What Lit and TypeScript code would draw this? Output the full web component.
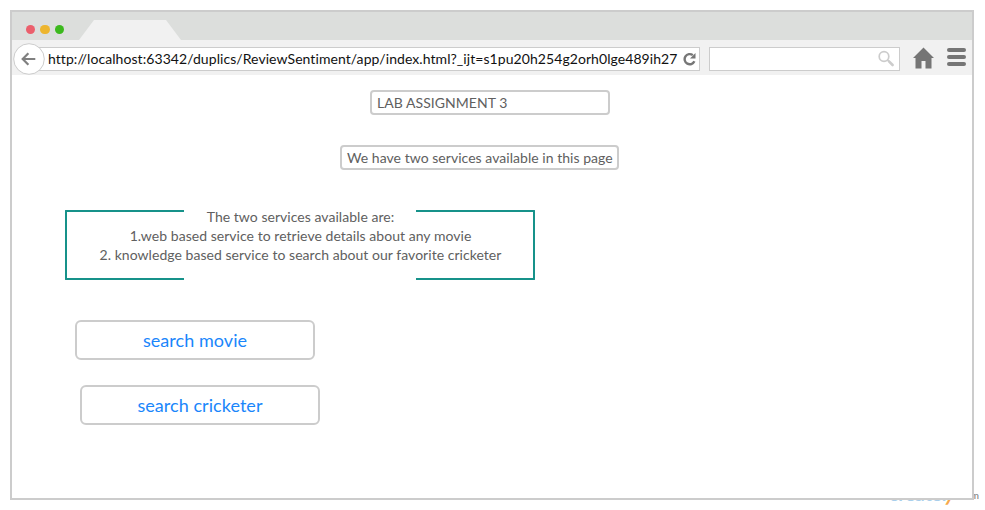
import { LitElement, html, css } from "lit";
import { customElement } from "lit/decorators.js";

@customElement("browser-chrome")
class BrowserChrome extends LitElement {
  static styles = css`
    :host { display: block; }
    .tabs { height: 28px; background: #dcdedc; display: flex; align-items: flex-end; }
    .lights { display: flex; gap: 5.5px; margin: 0 14.5px 6px 13.5px; }
    .light { width: 9.33px; height: 9.33px; border-radius: 50%; }
    .red { background: #eb5f6c; }
    .amber { background: #edb52e; }
    .green { background: #3cb91d; }
    .tab { display: block; width: 102px; height: 20px; }
    .bar { height: 35px; background: #f1f1f1; display: flex; align-items: center; box-sizing: border-box; padding: 0 7px 0 1px; }
    .back { display: block; width: 32px; height: 32px; flex: none; position: relative; margin-top: 2px; }
    .url, .search { box-sizing: border-box; height: 24px; margin-top: 3px; background: #fff; border: 1px solid #ccc; display: flex; align-items: center; flex: none; }
    .url { width: 671px; margin-left: -16px; padding: 0 3px 0 18px; justify-content: space-between; }
    .address { font: 14px/22px Lato, sans-serif; letter-spacing: .066px; font-variant-ligatures: common-ligatures; color: #111; white-space: nowrap; }
    .search { width: 191px; margin-left: 9px; justify-content: flex-end; padding-right: 4px; }
    svg { display: block; flex: none; }
    .glass { margin-bottom: 2px; }
    .home { margin: 0 0 0 13px; }
    .menu { margin: 0 0 1px 13px; }
  `;
  render() {
    return html`
      <div class="tabs">
        <div class="lights">
          <span class="light red"></span><span class="light amber"></span><span class="light green"></span>
        </div>
        <svg class="tab" viewBox="0 0 102 20"><path d="M0 20 15 0H87L102 20Z" fill="#f1f1f1" /></svg>
      </div>
      <div class="bar">
        <svg class="back" viewBox="0 0 32 32">
          <circle cx="16" cy="16" r="15.3" fill="#fff" stroke="#ccc" />
          <path d="M22.3 16H10M15.4 10.3 9.7 16 15.4 21.7" fill="none" stroke="#808080" stroke-width="2.2" />
        </svg>
        <div class="url">
          <span class="address">http://localhost:63342/duplics/ReviewSentiment/app/index.html?_ijt=s1pu20h254g2orh0lge489ih27</span>
          <svg width="13" height="14" viewBox="0 0 13 14">
            <path d="M11.4 9.3A5.1 5.1 0 1 1 9.8 3.1" fill="none" stroke="#777" stroke-width="2.4" />
            <path d="M12.5 1V6.5H7Z" fill="#777" />
          </svg>
        </div>
        <div class="search">
          <svg class="glass" width="17" height="17" viewBox="0 0 17 17" fill="none" stroke="#ccc">
            <circle cx="6" cy="6.5" r="4.8" stroke-width="1.7" />
            <path d="M9.5 10 11 11.5" stroke-width="1.6" />
            <path d="M11 11.3 14.6 15" stroke-width="2.6" stroke-linecap="round" />
          </svg>
        </div>
        <svg class="home" width="21" height="22" viewBox="0 0 21 22">
          <path d="M10.5 .5 21 11H18.5V21.5H12.5V14H8.5V21.5H2.5V11H0Z" fill="#757575" />
        </svg>
        <svg class="menu" width="19" height="18" viewBox="0 0 19 18" fill="#757575">
          <rect width="19" height="4" rx="2" /><rect y="7" width="19" height="4" rx="2" /><rect y="14" width="19" height="4" rx="2" />
        </svg>
      </div>
    `;
  }
}

@customElement("app-root")
class AppRoot extends LitElement {
  static styles = css`
    :host { display: block; position: relative; box-sizing: border-box; height: 510px; padding: 10px 11px 10px 10px; background: #fff; overflow: hidden; font: 14px/19px Lato, sans-serif; letter-spacing: .04px; color: #606060; }
    .window { position: relative; box-sizing: border-box; width: 964px; height: 490px; border: 2px solid #ccc; background: #fff; }
    .content { display: flex; flex-direction: column; align-items: flex-start; }
    .field { box-sizing: border-box; height: 25px; border: 2px solid #ccc; border-radius: 4px; padding: 1px 5px; white-space: nowrap; }
    .title { width: 240px; margin: 15px 0 0 358px; }
    .intro { width: 279px; margin: 30px 0 0 328px; }
    .services { box-sizing: border-box; width: 470px; height: 70px; margin: 40px 0 0 53px; display: flex; justify-content: space-between; }
    .bracket { box-sizing: border-box; width: 119px; flex: none; border: 2px solid #16928a; }
    .left { border-right: 0; border-radius: 1px 0 0 1px; }
    .right { border-left: 0; border-radius: 0 1px 1px 0; }
    .list { flex: 1; min-width: 0; display: flex; flex-direction: column; align-items: center; white-space: nowrap; margin-top: -3px; padding-left: 1px; }
    .button { box-sizing: border-box; width: 240px; height: 40px; border: 2px solid #ccc; border-radius: 6px; background: #fff; padding: 0; color: #1a86fb; font: 18px/36px Lato, sans-serif; letter-spacing: .05px; text-align: center; }
    .movie { margin: 40px 0 0 63px; }
    .cricketer { margin: 25px 0 0 68px; }
    .brand { position: absolute; left: 889px; top: 482px; display: flex; font: bold 19px/24px Lato, sans-serif; letter-spacing: 0; color: #a9cfec; }
    .accent { position: relative; top: -1px; color: #f7a94b; font-size: 22px; transform: skewX(-6deg); margin-left: -3px; }
    .suffix { position: absolute; left: 69px; top: 1px; font: 10px/24px Lato, sans-serif; color: #777; }
  `;
  render() {
    return html`
      <div class="brand"><span>createl</span><span class="accent">y</span><span class="suffix">.com</span></div>
      <div class="window">
        <browser-chrome></browser-chrome>
        <div class="content">
          <div class="field title">LAB ASSIGNMENT 3</div>
          <div class="field intro">We have two services available in this page</div>
          <div class="services">
            <div class="bracket left"></div>
            <div class="list">
              <span>The two services available are:</span>
              <span>1.web based service to retrieve details about any movie</span>
              <span>2. knowledge based service to search about our favorite cricketer</span>
            </div>
            <div class="bracket right"></div>
          </div>
          <button class="button movie">search movie</button>
          <button class="button cricketer">search cricketer</button>
        </div>
      </div>
    `;
  }
}
